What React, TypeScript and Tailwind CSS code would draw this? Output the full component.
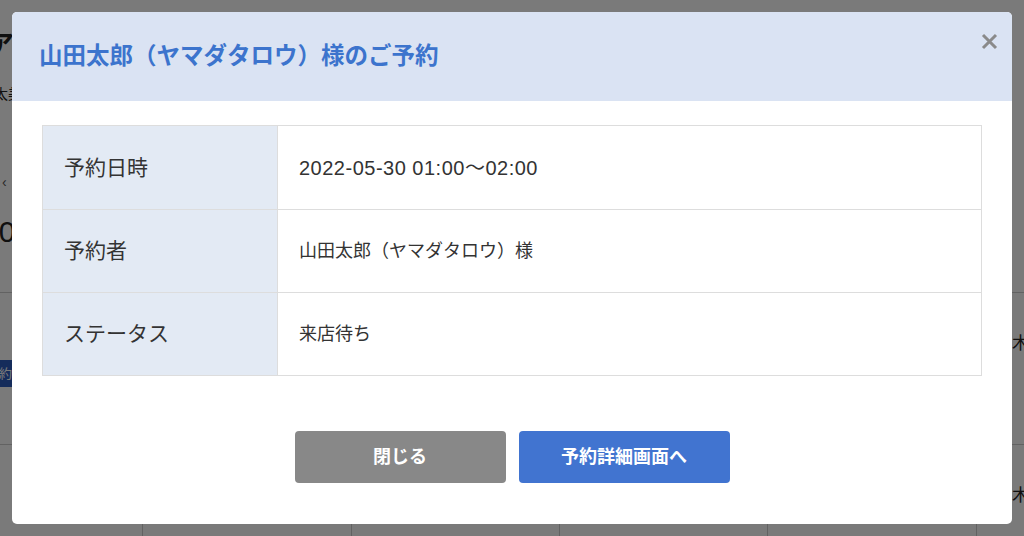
const jp = "font-['Liberation_Sans','Noto_Sans_CJK_JP',sans-serif]";

const rows = [
  { label: "予約日時", value: "2022-05-30 01:00〜02:00", big: true },
  { label: "予約者", value: "山田太郎（ヤマダタロウ）様", big: false },
  { label: "ステータス", value: "来店待ち", big: false },
];

function BackgroundPage() {
  return (
    <div className={`w-[1024px] h-[536px] bg-white overflow-hidden text-[#222] ${jp}`}>
      <div className="h-[293px] border-b border-[#ccc]">
        <div className="pt-[28px] -ml-[12px] text-[26px] font-bold leading-[34px] whitespace-nowrap">アイテム予約</div>
        <div className="mt-[22px] -ml-[6px] text-[14px] leading-[20px] whitespace-nowrap">太美容室</div>
        <div className="mt-[68px] ml-[2px] text-[14px] leading-[20px] text-[#555]">‹</div>
        <div className="mt-[22px] -ml-[18px] text-[30px] leading-[36px] whitespace-nowrap">2022-05-30</div>
      </div>
      <div className="h-[152px] border-b border-[#ccc] flex">
        <div className="w-[143px] flex flex-col">
          <div className="mt-[67px] -ml-[40px] w-[60px] h-[27px] bg-[#2c5cbf] text-white text-[13px] flex items-center justify-end pr-2">予約</div>
        </div>
        <div className="flex-1" />
        <div className="w-[47px] pt-[38px] pl-[35px] text-[17px] whitespace-nowrap overflow-hidden">木村</div>
      </div>
      <div className="h-[152px] flex">
        <div className="w-[143px] border-r border-[#ccc]" />
        <div className="w-[209px] border-r border-[#ccc]" />
        <div className="w-[208px] border-r border-[#ccc]" />
        <div className="w-[208px] border-r border-[#ccc]" />
        <div className="w-[209px] border-r border-[#ccc]" />
        <div className="flex-1 pt-[38px] pl-[35px] text-[17px] whitespace-nowrap overflow-hidden">木村</div>
      </div>
    </div>
  );
}

export default function App() {
  return (
    <div className="relative w-[1024px] h-[536px] overflow-hidden">
      <BackgroundPage />
      <div className="absolute inset-0 bg-black/[0.52] flex justify-center pt-[12px]">
        <div className={`w-[1000px] h-[512px] bg-white rounded-[5px] overflow-hidden flex flex-col ${jp}`}>
          <div className="h-[89px] bg-[#dae3f3] flex items-start justify-between pl-[27px] pr-[13px]">
            <h2 className="mt-[29px] text-[23.5px] leading-[30px] font-bold text-[#3c74cd]">
              山田太郎（ヤマダタロウ）様のご予約
            </h2>
            <button className="mt-[19px] w-[20px] h-[20px] flex items-center justify-center">
              <svg width="17" height="17" viewBox="0 0 17 17">
                <path d="M2 2L15 15M15 2L2 15" stroke="#8a8a8a" strokeWidth="3" strokeLinecap="butt" />
              </svg>
            </button>
          </div>
          <div className="px-[30px] pt-[24px]">
            <div className="border border-[#dddddd]">
              {rows.map((r, i) => (
                <div key={r.label} className={`flex h-[83px] ${i > 0 ? "border-t border-[#dddddd]" : ""}`}>
                  <div className="w-[235px] bg-[#e3eaf4] border-r border-[#dddddd] flex items-center pl-[21px] text-[21px] text-[#333]">
                    {r.label}
                  </div>
                  <div className={`flex-1 flex items-center pl-[21px] text-[#333] ${r.big ? "text-[20px] tracking-[0.5px]" : "text-[18px]"}`}>
                    {r.value}
                  </div>
                </div>
              ))}
            </div>
          </div>
          <div className="flex justify-center gap-[13px] mt-[55px]">
            <button className="w-[211px] h-[52px] rounded-[4px] bg-[#888888] text-white font-bold text-[18px]">閉じる</button>
            <button className="w-[211px] h-[52px] rounded-[4px] bg-[#4174d0] text-white font-bold text-[18px]">予約詳細画面へ</button>
          </div>
        </div>
      </div>
    </div>
  );
}
